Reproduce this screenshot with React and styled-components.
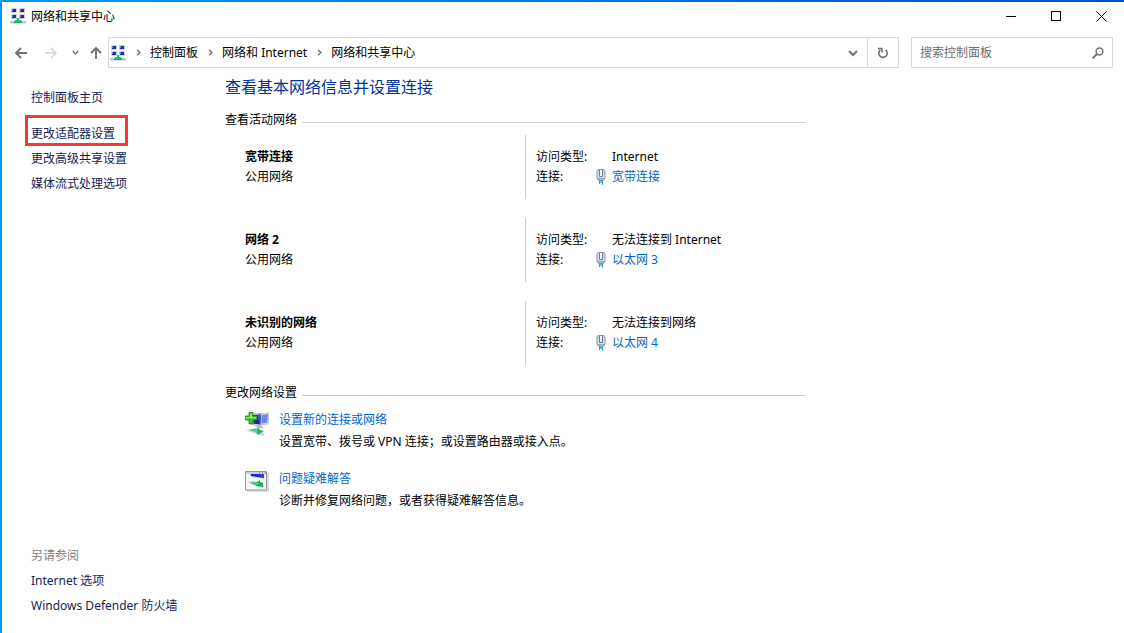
import React, { useState } from 'react';
import styled, { createGlobalStyle } from 'styled-components';

const networks = [
    { name: '宽带连接', kind: '公用网络', access: 'Internet', link: '宽带连接' },
    { name: '网络 2', kind: '公用网络', access: '无法连接到 Internet', link: '以太网 3' },
    { name: '未识别的网络', kind: '公用网络', access: '无法连接到网络', link: '以太网 4' }
];

const crumbs = ['控制面板', '网络和 Internet', '网络和共享中心'];

const NetworkIcon = () => (
    <svg width="16" height="16" viewBox="0 0 16 16" shapeRendering="crispEdges" aria-hidden="true">
        {[[1, 0], [9, 0], [1, 6], [9, 6]].map(([x, y]) => (
            <g key={`${x}-${y}`}>
                <rect x={x} y={y} width="6" height="5" fill="#cfcfd6" />
                <rect x={x + 1} y={y + 1} width="4" height="3" fill="#1c2fa6" />
                <rect x={x + 1} y={y + 1} width="1" height="2" fill="#6d84d8" />
            </g>
        ))}
        <rect x="0" y="13" width="16" height="2" fill="#c4c6c6" />
        <rect x="0" y="15" width="16" height="1" fill="#e2e2e2" />
        <path d="M7 10h2v2h2v1h1v2H4v-2h1v-1h2z" fill="#12c878" />
        <rect x="4" y="14" width="8" height="1" fill="#0ca568" />
    </svg>
);

const BackIcon = () => (
    <svg width="14" height="12" viewBox="0 0 14 12" fill="none" stroke="currentColor" strokeWidth="1.8" aria-hidden="true">
        <path d="M13 6H2M7 1L2 6l5 5" />
    </svg>
);

const ForwardIcon = () => (
    <svg width="14" height="12" viewBox="0 0 14 12" fill="none" stroke="currentColor" strokeWidth="1.5" aria-hidden="true">
        <path d="M1 6h11M7 1l5 5-5 5" />
    </svg>
);

const UpIcon = () => (
    <svg width="12" height="14" viewBox="0 0 12 14" fill="none" stroke="currentColor" strokeWidth="1.8" aria-hidden="true">
        <path d="M6 13V2M1 7l5-5 5 5" />
    </svg>
);

const DownIcon = ({ size = 10 }) => (
    <svg width={size} height={size} viewBox="0 0 10 10" fill="none" stroke="currentColor" strokeWidth="2" aria-hidden="true">
        <path d="M1 3l4 4 4-4" />
    </svg>
);

const CrumbIcon = () => (
    <svg width="5" height="7" viewBox="0 0 5 7" fill="none" stroke="#767676" strokeWidth="1.5" aria-hidden="true">
        <path d="M1 .7l3 2.8-3 2.8" />
    </svg>
);

const RefreshIcon = () => (
    <svg width="12" height="12" viewBox="0 0 12 12" fill="none" stroke="currentColor" strokeWidth="1.6" aria-hidden="true">
        <path d="M8.6 2.9A4.2 4.2 0 1 1 3.4 2.9" />
        <path d="M1 1.5h4v4" />
    </svg>
);

const SearchIcon = () => (
    <svg width="12" height="12" viewBox="0 0 12 12" fill="none" stroke="#767676" aria-hidden="true">
        <circle cx="7.5" cy="4.5" r="3.4" strokeWidth="1.5" />
        <path d="M5 7L.8 11.2" strokeWidth="2" />
    </svg>
);

const PlugIcon = () => (
    <svg width="10" height="16" viewBox="0 0 10 16" aria-hidden="true">
        <path d="M2 .5h6l1 1.500v7L8 11H2L1 9V2z" fill="#d9dfe9" stroke="#8795ab" />
        <path d="M3.500 1v6.500h3V1" fill="#f8fafc" stroke="#6d7c96" />
        <path d="M2 9.500h6" stroke="#98a6bb" />
        <path d="M3.500 11v4M6.500 11v5" stroke="#2f9fcb" />
        <path d="M5 11v3" stroke="#175f84" />
    </svg>
);

const NewConnectionIcon = () => (
    <svg width="24" height="24" viewBox="0 1 24 24" aria-hidden="true">
        <path d="M15 3l9-1-1 11-7 1z" fill="#d8dbe8" stroke="#aeb3c6" strokeWidth=".7" />
        <path d="M17 4l6-.8-.9 8.600-5.100.8z" fill="#6f87dc" />
        <path d="M7 3l10-.5-1 12.500-8-1z" fill="#d4d8e8" stroke="#9ca3bf" strokeWidth=".7" />
        <path d="M8 4l8-.5-.8 10-6.700-.8z" fill="#1725b5" />
        <path d="M12 4l4-.5-.8 10z" fill="#3d55d8" />
        <path d="M11 14l5 1 3 2h-7z" fill="#b8bcc8" />
        <path d="M0 19l8-1 12 5-2 2z" fill="#d0d3d5" />
        <path d="M4 19l10-2 1 2 4 1-6 4-2-3z" fill="#24b765" />
        <path d="M5 19.500l9-1.500-2 3z" fill="#56d48a" />
        <path d="M4 1.500h4V5h4v4H8v4H4V9H0V5h4z" fill="#3fbf25" stroke="#198512" strokeWidth=".8" />
        <path d="M5 2.500h2V6h4v1.500H1V6h4z" fill="#8ee865" />
    </svg>
);

const TroubleshootIcon = () => (
    <svg width="24" height="22" viewBox="0 0 24 22" aria-hidden="true">
        <path d="M2 2h22v19H2z" fill="#dedede" />
        <path d="M.5.5h21v18.500H.5z" fill="#f4f6f8" stroke="#8d959e" />
        <path d="M1 1h20v2H1z" fill="#cbd3df" />
        <path d="M14 2h1M17 2h1M20 2h1" stroke="#55606f" />
        <path d="M4 3h16l-1 5-13-2z" fill="#cfd4e5" />
        <path d="M6 3h13v4L6 5z" fill="#1a2aae" />
        <path d="M12 3h7v4z" fill="#2e44cf" />
        <path d="M2 11l6-1 12 5-3 2z" fill="#c5c9ce" />
        <path d="M5 12l7-1 3-2v2l3 1v4l-7-1-1-1z" fill="#16b25a" />
        <path d="M7 12.500l7-.5-3 2z" fill="#5ed793" />
    </svg>
);

const App = () => {
    const [search, setSearch] = useState('');

    return (
        <Window>
            <GlobalStyle />
            <TitleBar>
                <NetworkIcon />
                <Title>网络和共享中心</Title>
                <WindowButton aria-label="最小化">
                    <svg width="11" height="11" stroke="#000" shapeRendering="crispEdges"><path d="M0 5.500h10" /></svg>
                </WindowButton>
                <WindowButton aria-label="最大化">
                    <svg width="11" height="11" stroke="#000" fill="none" shapeRendering="crispEdges"><path d="M.5.5h9v9h-9z" /></svg>
                </WindowButton>
                <WindowButton aria-label="关闭">
                    <svg width="11" height="11" stroke="#000"><path d="M.5.5l10 10M10.500.5l-10 10" /></svg>
                </WindowButton>
            </TitleBar>

            <NavBar>
                <NavButton $width={30} aria-label="返回"><BackIcon /></NavButton>
                <NavButton $width={30} aria-label="前进" disabled><ForwardIcon /></NavButton>
                <NavButton $width={18} aria-label="最近浏览的位置"><DownIcon size={7} /></NavButton>
                <NavButton $width={24} aria-label="向上"><UpIcon /></NavButton>
                <AddressBar>
                    <NetworkIcon />
                    {crumbs.map(crumb => (
                        <React.Fragment key={crumb}>
                            <Separator><CrumbIcon /></Separator>
                            <Crumb href="#">{crumb}</Crumb>
                        </React.Fragment>
                    ))}
                    <Spacer />
                    <NavButton $width={28} aria-label="以前的位置"><DownIcon /></NavButton>
                    <RefreshButton $width={31} aria-label="刷新"><RefreshIcon /></RefreshButton>
                </AddressBar>
                <SearchBox>
                    <SearchInput
                        type="text"
                        name="search"
                        aria-label="搜索控制面板"
                        placeholder="搜索控制面板"
                        value={search}
                        onChange={evt => setSearch(evt.target.value)}
                    />
                    <SearchIcon />
                </SearchBox>
            </NavBar>

            <Body>
                <Sidebar>
                    <HomeLink href="#">控制面板主页</HomeLink>
                    <MarkedLink href="#">更改适配器设置</MarkedLink>
                    <SideLink href="#">更改高级共享设置</SideLink>
                    <SideLink href="#">媒体流式处理选项</SideLink>
                    <SeeAlso>另请参阅</SeeAlso>
                    <SideLink href="#">Internet 选项</SideLink>
                    <SideLink href="#">Windows Defender 防火墙</SideLink>
                </Sidebar>

                <Main>
                    <Heading>查看基本网络信息并设置连接</Heading>
                    <GroupTitle>查看活动网络</GroupTitle>
                    <NetworkList>
                        {networks.map(net => (
                            <Network key={net.name}>
                                <NetworkName>
                                    <strong>{net.name}</strong>
                                    <span>{net.kind}</span>
                                </NetworkName>
                                <Details>
                                    <span>访问类型:</span>
                                    <Value>{net.access}</Value>
                                    <span>连接:</span>
                                    <Connection>
                                        <PlugIcon />
                                        <Link href="#">{net.link}</Link>
                                    </Connection>
                                </Details>
                            </Network>
                        ))}
                    </NetworkList>

                    <GroupTitle>更改网络设置</GroupTitle>
                    <TaskList>
                        <Task>
                            <NewConnectionIcon />
                            <TaskText>
                                <Link href="#">设置新的连接或网络</Link>
                                <span>设置宽带、拨号或 VPN 连接；或设置路由器或接入点。</span>
                            </TaskText>
                        </Task>
                        <Task>
                            <TroubleshootIcon />
                            <TaskText>
                                <Link href="#">问题疑难解答</Link>
                                <span>诊断并修复网络问题，或者获得疑难解答信息。</span>
                            </TaskText>
                        </Task>
                    </TaskList>
                </Main>
            </Body>
        </Window>
    )
}

export default App;

const GlobalStyle = createGlobalStyle`
    * {
        box-sizing: border-box;
    }

    body {
        margin: 0;
        background: #fff;
        color: #000;
        font: 12px/20px "Noto Sans", "Noto Sans CJK SC", sans-serif;
    }

    button, input {
        font: inherit;
    }

    svg {
        flex: none;
        display: block;
    }
`

const Window = styled.div`
    display: flex;
    flex-direction: column;
    min-height: 100vh;
    border-top: 2px solid #0078d7;
    border-left: 2px solid #0091e6;
    border-image: linear-gradient(to right, #0099f0, #0050c8) 2;
    border-right: 0;
    border-bottom: 0;
`

const TitleBar = styled.header`
    display: flex;
    align-items: center;
    height: 28px;
    padding-left: 8px;
`

const Title = styled.span`
    flex: 1;
    padding: 2px 0 0 5px;
`

const WindowButton = styled.button`
    display: flex;
    align-items: center;
    justify-content: center;
    width: 45px;
    height: 28px;
    padding: 0;
    border: 0;
    background: none;
`

const NavBar = styled.nav`
    display: flex;
    margin-top: 7px;
    padding: 0 11px 0 4px;
`

const NavButton = styled.button`
    display: flex;
    flex: none;
    align-items: center;
    justify-content: center;
    width: ${props => props.$width}px;
    padding: 0;
    border: 0;
    background: none;
    color: #707070;

    &:disabled {
        color: #d4d4d4;
    }
`

const AddressBar = styled.div`
    display: flex;
    flex: 1;
    align-items: center;
    height: 31px;
    padding-left: 1px;
    border: 1px solid #d9d9d9;

    ${NavButton} {
        height: 29px;
    }
`

const Separator = styled.span`
    display: flex;
    justify-content: center;
    width: 24px;
`

const Crumb = styled.a`
    color: #000;
    text-decoration: none;
`

const Spacer = styled.div`
    flex: 1;
`

const RefreshButton = styled(NavButton)`
    border-left: 1px solid #d9d9d9;
`

const SearchBox = styled.label`
    display: flex;
    align-items: center;
    width: 202px;
    margin-left: 12px;
    padding: 0 8px;
    border: 1px solid #d9d9d9;
`

const SearchInput = styled.input`
    flex: 1;
    min-width: 0;
    padding: 0;
    border: 0;
    outline: 0;
    background: none;

    &::placeholder {
        color: #6d6d6d;
        opacity: 1;
    }
`

const Body = styled.div`
    display: flex;
    flex: 1;
`

const Sidebar = styled.aside`
    display: flex;
    flex-direction: column;
    align-items: flex-start;
    gap: 1px;
    width: 223px;
    padding: 18px 0 15px 29px;
    line-height: 24px;
`

const SideLink = styled.a`
    color: #151c55;
    text-decoration: none;
`

const HomeLink = styled(SideLink)`
    margin-bottom: 11px;
`

const MarkedLink = styled(SideLink)`
    position: relative;

    &::after {
        content: '';
        position: absolute;
        inset: -7px -13px 0 -6px;
        border: 3px solid #f23a3a;
        pointer-events: none;
    }
`

const SeeAlso = styled.span`
    margin-top: auto;
    color: #808080;
`

const Main = styled.main`
    flex: 1;
    max-width: 580px;
    padding-top: 7px;
`

const Heading = styled.h1`
    margin: 0 0 11px;
    color: #003399;
    font-size: 16px;
    font-weight: 400;
    line-height: 24px;
`

const GroupTitle = styled.h2`
    display: flex;
    align-items: center;
    margin: 0;
    font-size: 12px;
    font-weight: 400;

    &::after {
        content: '';
        flex: 1;
        margin: 4px 0 0 5px;
        border-top: 1px solid #cccccc;
    }
`

const NetworkList = styled.div`
    display: flex;
    flex-direction: column;
    gap: 19px;
    margin: 5px 0 18px;
`

const Network = styled.section`
    display: grid;
    grid-template-columns: 300px 1fr;
    height: 64px;
`

const NetworkName = styled.div`
    display: flex;
    flex-direction: column;
    padding: 12px 0 0 20px;
`

const Details = styled.div`
    display: grid;
    grid-template-columns: 60px 1fr;
    grid-auto-rows: 20px;
    padding: 12px 0 0 10px;
    border-left: 1px solid #cccccc;
`

const Value = styled.span`
    padding-left: 16px;
`

const Connection = styled.div`
    display: flex;
    align-items: center;
    gap: 6px;
`

const Link = styled.a`
    color: #0066cc;
    text-decoration: none;
`

const TaskList = styled.div`
    display: flex;
    flex-direction: column;
    gap: 15px;
    margin-top: 6px;
    padding-left: 20px;
    line-height: 22px;
`

const Task = styled.div`
    display: flex;
    gap: 10px;

    svg {
        margin-top: 3px;
    }
`

const TaskText = styled.div`
    display: flex;
    flex-direction: column;
    align-items: flex-start;
`
